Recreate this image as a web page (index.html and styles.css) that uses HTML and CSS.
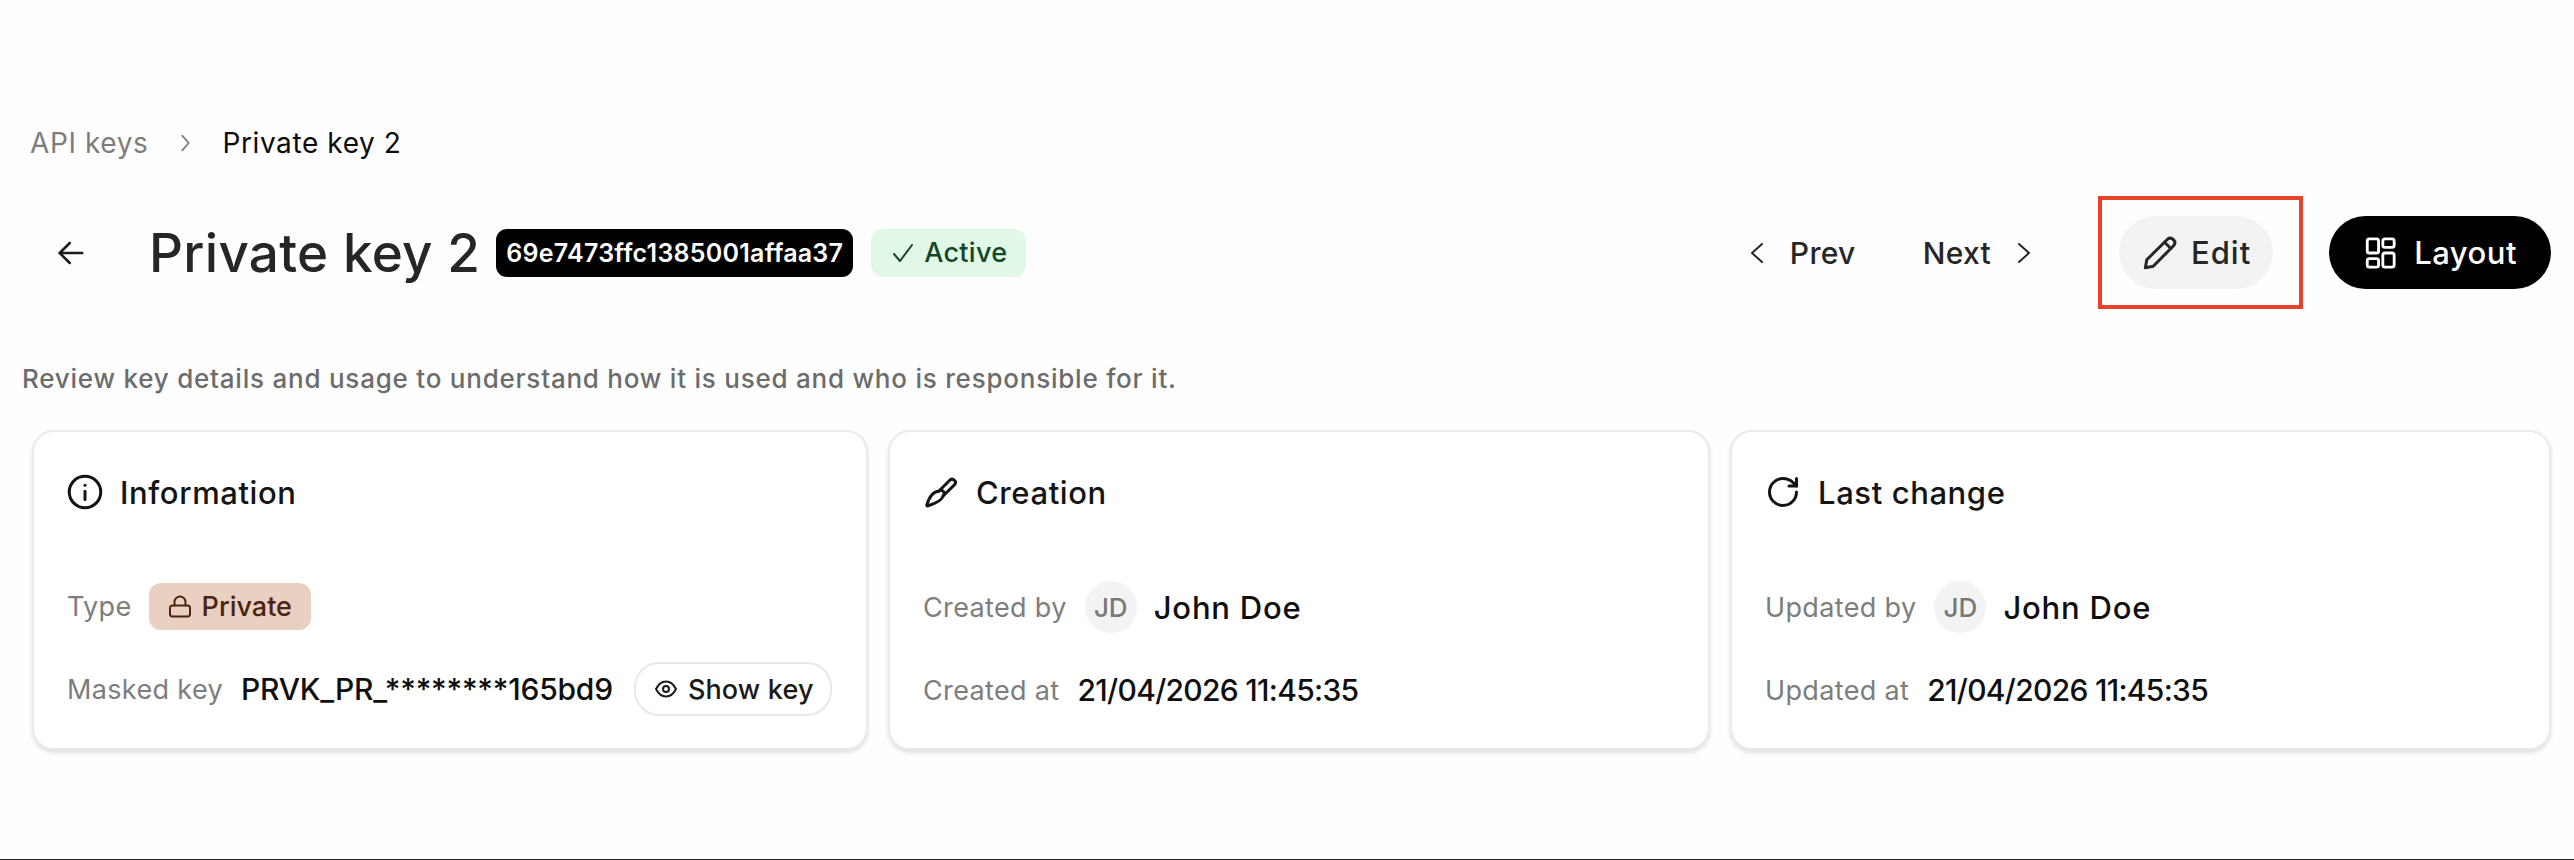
FILE: index.html
```html
<!DOCTYPE html>
<html lang="en">
<head>
	<meta charset="UTF-8">
	<title>Private key 2</title>
	<link rel="stylesheet" href="styles.css">
</head>
<body>
	<div class="page">
		<div class="crumbs">
			<span class="crumb-link">API keys</span>
			<svg class="crumb-sep" viewBox="0 0 24 24"><path d="m9 4 7 8-7 8"/></svg>
			<span class="crumb-now">Private key 2</span>
		</div>

		<div class="header">
			<svg class="back" viewBox="0 0 24 24"><path d="M21 12H3"/><path d="m11 4-8 8 8 8"/></svg>
			<h1>Private key 2</h1>
			<span class="code">69e7473ffc1385001affaa37</span>
			<span class="status">
				<svg class="status-icon" viewBox="0 0 24 24"><path d="m3 13 6 7L21 4"/></svg>
				Active
			</span>
			<div class="actions">
				<span class="pager pager-prev">
					<svg class="pager-icon" viewBox="0 0 24 24"><path d="m17 3-10 9 10 9"/></svg>
					Prev
				</span>
				<span class="pager pager-next">
					Next
					<svg class="pager-icon" viewBox="0 0 24 24"><path d="m7 3 10 9-10 9"/></svg>
				</span>
				<div class="highlight">
					<span class="btn btn-edit">
						<svg class="btn-icon" viewBox="0 0 24 24"><path d="M3.200 16.500 17 2.800a3 3 0 0 1 4.200 4.200L7.500 20.800l-5.300 1z"/><path d="m15 4.800 4.200 4.200"/></svg>
						Edit
					</span>
				</div>
				<span class="btn btn-layout">
					<svg class="btn-icon btn-icon-layout" viewBox="0 0 24 24"><rect x="3" y="2" width="8" height="10" rx="1.500"/><rect x="14" y="2" width="8" height="6" rx="1.500"/><rect x="14" y="12" width="8" height="10" rx="1.500"/><rect x="3" y="16" width="8" height="6" rx="1.500"/></svg>
					Layout
				</span>
			</div>
		</div>

		<p class="desc">Review key details and usage to understand how it is used and who is responsible for it.</p>

		<div class="cards">
			<div class="card">
				<div class="card-head">
					<svg class="card-icon" viewBox="0 0 24 24"><circle cx="12" cy="12" r="10.500"/><path d="M12 17v-5.500"/><path d="M12 7.500h.01"/></svg>
					<span>Information</span>
				</div>
				<div class="rows rows-info">
					<div class="row">
						<span class="label">Type</span>
						<span class="type-pill">
							<svg class="type-icon" viewBox="0 0 24 24"><rect x="2" y="11.500" width="20" height="11" rx="2.500"/><path d="M6.500 11.500V8a5.500 5.500 0 0 1 11 0v3.500"/></svg>
							Private
						</span>
					</div>
					<div class="row">
						<span class="label">Masked key</span>
						<span class="value value-key">PRVK_PR_********165bd9</span>
						<span class="show-key">
							<svg class="eye" viewBox="0 0 24 24"><path d="M2 12c2.500-5 6-7.500 10-7.500s7.500 2.500 10 7.500c-2.500 5-6 7.500-10 7.500S4.500 17 2 12z"/><circle cx="12" cy="12" r="3"/></svg>
							Show key
						</span>
					</div>
				</div>
			</div>

			<div class="card">
				<div class="card-head">
					<svg class="card-icon" viewBox="0 0 24 24"><path d="M10.500 11.500 18 4a2.200 2.200 0 0 1 3.100 3.100l-7.600 7.400"/><path d="M10.500 11.500C7 11.700 4.500 14 2.500 20.800c0 .3.200.5.500.5 6.500-2 9.800-3.800 10.500-6.800a2.100 2.100 0 0 0-3-3z"/></svg>
					<span>Creation</span>
				</div>
				<div class="rows">
					<div class="row">
						<span class="label">Created by</span>
						<span class="avatar">JD</span>
						<span class="value value-name">John Doe</span>
					</div>
					<div class="row">
						<span class="label">Created at</span>
						<span class="value value-date">21/04/2026 11:45:35</span>
					</div>
				</div>
			</div>

			<div class="card">
				<div class="card-head">
					<svg class="card-icon" viewBox="0 0 24 24"><path d="M21 12a9 9 0 1 1-9-9c2.520 0 4.930 1 6.740 2.740L21 8"/><path d="M21 3v5h-5"/></svg>
					<span>Last change</span>
				</div>
				<div class="rows">
					<div class="row">
						<span class="label">Updated by</span>
						<span class="avatar">JD</span>
						<span class="value value-name">John Doe</span>
					</div>
					<div class="row">
						<span class="label">Updated at</span>
						<span class="value value-date">21/04/2026 11:45:35</span>
					</div>
				</div>
			</div>
		</div>
	</div>
</body>
</html>
```

FILE: styles.css
```css
body {
	margin: 0;
	background: rgb(254, 254, 254);
	color: rgb(26, 26, 26);
	font-family: Inter, "Liberation Sans", sans-serif;
	font-weight: 500;
}

svg {
	display: block;
	flex: none;
	fill: none;
	stroke: currentColor;
	stroke-width: 2;
	stroke-linecap: round;
	stroke-linejoin: round;
}

.page {
	box-sizing: border-box;
	height: 860px;
	padding: 123px 23px 0 22px;
	border-bottom: 1px solid rgb(40, 40, 40);
}

.crumbs {
	display: flex;
	align-items: center;
	height: 40px;
	margin-left: 8px;
	font-size: 28px;
	font-weight: 400;
	letter-spacing: 0.6px;
}

.crumb-link {
	color: rgb(125, 125, 125);
}

.crumb-sep {
	width: 22px;
	height: 22px;
	margin: 0 26px;
	color: rgb(125, 125, 125);
}

.crumb-now {
	color: rgb(10, 10, 10);
}

.header {
	display: flex;
	align-items: center;
	height: 73px;
	margin-top: 53px;
}

.back {
	width: 30px;
	height: 30px;
	margin-left: 34px;
}

h1 {
	margin: 0 16px 0 63px;
	color: rgb(38, 38, 38);
	font-size: 53px;
	font-weight: 500;
	letter-spacing: 0.3px;
}

.code {
	display: flex;
	align-items: center;
	height: 48px;
	padding: 0 10px;
	border-radius: 11px;
	background: rgb(0, 0, 0);
	color: rgb(255, 255, 255);
	font-size: 25px;
	font-weight: 600;
	letter-spacing: 0.25px;
}

.status {
	display: flex;
	align-items: center;
	gap: 9px;
	height: 48px;
	margin-left: 18px;
	padding: 0 19px 0 20px;
	border-radius: 12px;
	background: rgb(226, 248, 230);
	color: rgb(20, 70, 40);
	font-size: 27px;
	letter-spacing: 0.3px;
}

.status-icon {
	width: 24px;
	height: 24px;
}

.actions {
	display: flex;
	align-items: center;
	margin-left: auto;
}

.pager {
	display: flex;
	align-items: center;
	gap: 21px;
	color: rgb(38, 38, 38);
	font-size: 30px;
	letter-spacing: 0.3px;
}

.pager-icon {
	width: 24px;
	height: 24px;
}

.pager-next {
	margin-left: 67px;
}

.highlight {
	display: flex;
	align-items: center;
	box-sizing: border-box;
	height: 113px;
	margin-left: 62px;
	padding: 0 26px 0 17px;
	border: 4px solid rgb(232, 67, 42);
}

.btn {
	display: flex;
	align-items: center;
	height: 73px;
	border-radius: 37px;
	font-size: 31px;
	letter-spacing: 0.5px;
}

.btn-edit {
	gap: 13px;
	padding: 0 22px 0 23px;
	background: rgb(243, 243, 243);
	color: rgb(38, 38, 38);
	letter-spacing: 1px;
}

.btn-layout {
	gap: 17px;
	margin-left: 26px;
	padding: 0 34px;
	background: rgb(0, 0, 0);
	color: rgb(255, 255, 255);
}

.btn-icon {
	width: 36px;
	height: 36px;
}

.btn-icon-layout {
	width: 34px;
	height: 34px;
}

.desc {
	margin: 72px 0 0;
	color: rgb(108, 108, 108);
	font-size: 26px;
	line-height: 36px;
	letter-spacing: 0.77px;
}

.cards {
	display: grid;
	grid-template-columns: 836px 822px 821px;
	gap: 20px;
	margin: 33px 0 0 10px;
}

.card {
	box-sizing: border-box;
	height: 320px;
	padding: 40px 33px 0;
	border: 2px solid rgb(234, 234, 234);
	border-radius: 22px;
	background: rgb(255, 255, 255);
	box-shadow: 0 3px 4px rgba(0, 0, 0, 0.12);
}

.card-head {
	display: flex;
	align-items: center;
	gap: 17px;
	height: 40px;
	color: rgb(20, 20, 20);
	font-size: 31px;
	letter-spacing: 0.6px;
}

.card-icon {
	width: 36px;
	height: 36px;
}

.rows {
	display: flex;
	flex-direction: column;
	gap: 31px;
	margin-top: 69px;
}

.rows-info {
	margin-top: 68px;
}

.row {
	display: flex;
	align-items: center;
	height: 52px;
}

.label {
	margin-right: 18px;
	color: rgb(125, 125, 125);
	font-size: 27px;
	font-weight: 400;
	letter-spacing: 0.35px;
}

.value {
	color: rgb(15, 15, 15);
	font-size: 30px;
}

.value-key {
	letter-spacing: -0.2px;
}

.value-name {
	font-size: 31px;
	letter-spacing: 0.8px;
}

.value-date {
	letter-spacing: -0.7px;
}

.avatar {
	display: flex;
	align-items: center;
	justify-content: center;
	width: 52px;
	height: 52px;
	margin-right: 17px;
	border-radius: 50%;
	background: rgb(243, 243, 243);
	color: rgb(120, 120, 120);
	font-size: 26px;
}

.type-pill {
	display: flex;
	align-items: center;
	gap: 10px;
	height: 47px;
	margin-left: -1px;
	padding: 0 19px;
	border-radius: 12px;
	background: rgb(233, 208, 192);
	color: rgb(74, 36, 18);
	font-size: 27px;
}

.type-icon {
	width: 24px;
	height: 24px;
}

.show-key {
	display: flex;
	align-items: center;
	gap: 10px;
	height: 50px;
	margin-left: 21px;
	padding: 0 16px 0 18px;
	border: 2px solid rgb(232, 232, 232);
	border-radius: 25px;
	font-size: 27px;
	letter-spacing: 0.15px;
}

.eye {
	width: 24px;
	height: 24px;
}
```
